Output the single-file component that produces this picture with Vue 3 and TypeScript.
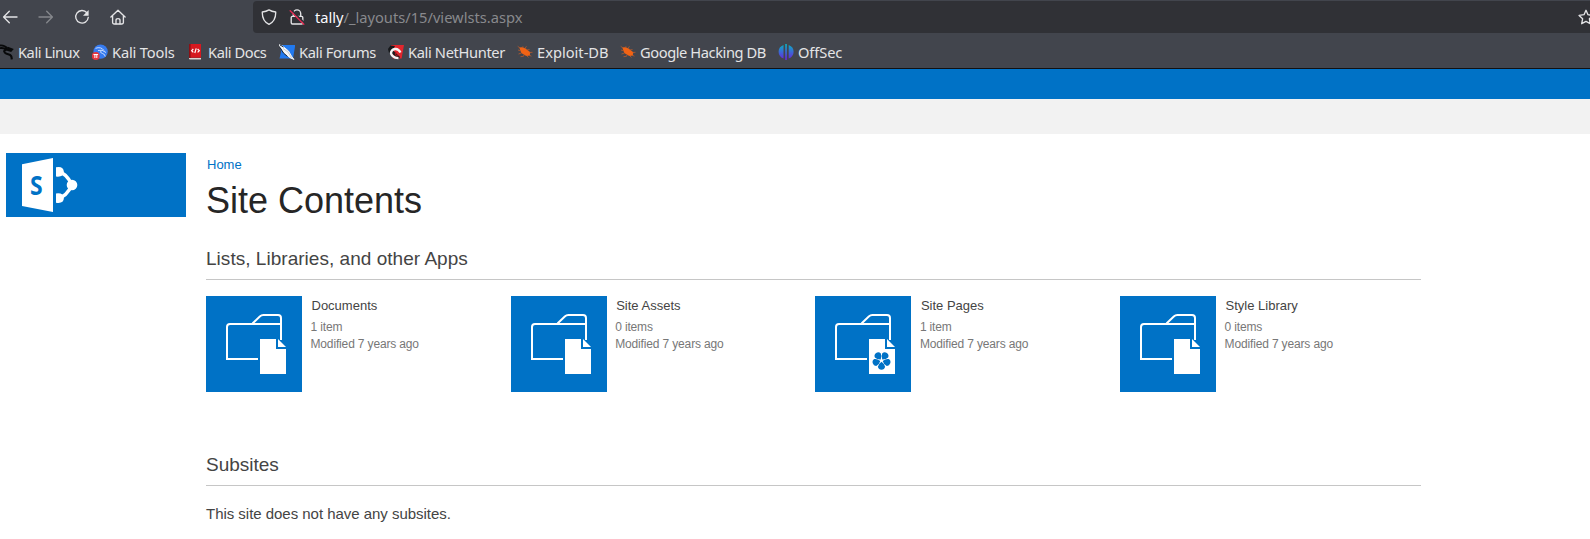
<script setup lang="ts">
interface Bookmark {
  label: string
  icon: 'dragon' | 'tools' | 'docs' | 'forums' | 'hunter' | 'bug' | 'offsec'
  slot: string
}

interface AppTile {
  name: string
  count: string
  modified: string
  flower?: boolean
}

const bookmarks: Bookmark[] = [
  { label: 'Kali Linux', icon: 'dragon', slot: 'w-linux' },
  { label: 'Kali Tools', icon: 'tools', slot: 'w-tools' },
  { label: 'Kali Docs', icon: 'docs', slot: 'w-docs' },
  { label: 'Kali Forums', icon: 'forums', slot: 'w-forums' },
  { label: 'Kali NetHunter', icon: 'hunter', slot: 'w-hunter' },
  { label: 'Exploit-DB', icon: 'bug', slot: 'w-exploit' },
  { label: 'Google Hacking DB', icon: 'bug', slot: 'w-google' },
  { label: 'OffSec', icon: 'offsec', slot: 'w-offsec' },
]

const tiles: AppTile[] = [
  { name: 'Documents', count: '1 item', modified: 'Modified 7 years ago' },
  { name: 'Site Assets', count: '0 items', modified: 'Modified 7 years ago' },
  { name: 'Site Pages', count: '1 item', modified: 'Modified 7 years ago', flower: true },
  { name: 'Style Library', count: '0 items', modified: 'Modified 7 years ago' },
]

const petals: number[] = [0, 72, 144, 216, 288]
</script>

<template>
  <div class="window">
    <header class="chrome">
      <div class="toolbar">
        <div class="nav">
          <svg class="nav-icon" viewBox="0 0 16 16"><path d="M15 8H1.8M7.3 2.3 1.6 8l5.7 5.7" /></svg>
          <svg class="nav-icon dim" viewBox="0 0 16 16"><path d="M1 8h13.2M8.7 2.3 14.4 8l-5.7 5.7" /></svg>
          <svg class="nav-icon" viewBox="0 0 16 16">
            <path d="M12.900 3.800A6.300 6.300 0 1 0 14.300 8.300" />
            <path class="solid" d="M14.600 1v5.200a.5.5 0 0 1-.5.5H9z" />
          </svg>
          <svg class="nav-icon" viewBox="0 0 16 16">
            <path d="M.9 8.100 8 1.200l7.100 6.900M2.600 7v6.600q0 1.400 1.400 1.400h8q1.400 0 1.400-1.400V7" />
            <path d="M6 14.800v-3.600q0-1.600 2-1.600t2 1.600v3.600" />
          </svg>
        </div>
        <div class="urlbar">
          <svg class="url-icon shield" viewBox="0 0 16 16">
            <path d="M8 .9Q5.300 2.600 1.300 3C1.100 9 3 13 8 15.300 13 13 14.900 9 14.700 3Q10.700 2.600 8 .9Z" />
          </svg>
          <svg class="url-icon lock" viewBox="0 0 16 16">
            <path d="M4.300 7V4.500a3.700 3.700 0 0 1 7.400 0V7M3.400 7.300h9.200q1.200 0 1.200 1.200v5q0 1.500-1.200 1.500H3.400q-1.200 0-1.200-1.500v-5q0-1.200 1.200-1.200Z" />
            <path class="under" d="M2.200.7 15.800 14.300" />
            <path class="slash" d="M1.200 1.700 14.800 15.300" />
          </svg>
          <span class="url"><b>tally</b>/_layouts/15/viewlsts.aspx</span>
          <svg class="url-icon star" viewBox="0 0 16 16">
            <path d="m8 1.300 2 4.400 4.900.7-3.500 3.400.8 4.900L8 12.400l-4.300 2.300.9-4.900L1.100 6.400 6 5.700Z" />
          </svg>
        </div>
      </div>
      <nav class="bookmarks">
        <a v-for="b in bookmarks" :key="b.label" class="bookmark" :class="b.slot">
          <svg v-if="b.icon === 'dragon'" class="fav" viewBox="0 0 16 16">
            <g fill="none" stroke="#08090a">
              <path stroke-width="1.900" d="M0 1.800c4-1 7.200-.2 9.700 2.900M0 4.600c3.500-1.200 6-.8 8.500.9" />
              <path stroke-width="2.100" d="M9.500 3.600 14 5.500l-1.200 1.300-3.500-1C6.500 5.500 5.200 7 7 8.800c2 1.700 4.800 1.300 6 3 .8 1.200.6 2.300.8 3.500" />
            </g>
          </svg>
          <svg v-else-if="b.icon === 'tools'" class="fav" viewBox="0 0 16 16">
            <circle cx="8.600" cy="7.600" r="7.200" fill="#367bf0" />
            <path d="M3.500 4.300Q9 2.300 12 6.500M6 6.500q4-1.500 8 2M9 6.700q-1.500 2 1.500 2.800 2.500.6 2.700 3" fill="none" stroke="#d9e7ff" stroke-width=".9" />
            <circle cx="3.800" cy="12" r="3.900" fill="#e5373f" />
            <path d="M1.500 10.500h4.600M2.900 10.500V14M4.800 10.500V14" stroke="#fff" stroke-width="1" fill="none" />
          </svg>
          <svg v-else-if="b.icon === 'docs'" class="fav" viewBox="0 0 16 16">
            <path d="M2.500 0H13v13.700H1V1.500Q1 0 2.500 0Z" fill="#d71920" />
            <path d="M1 0h1.600v14H1Z" fill="#8d1015" />
            <path d="M1 14h12v1.500H2Q1 15.500 1 14.600Z" fill="#ddd5d3" />
            <path d="M5.300 5 3.700 6.700l1.600 1.700M9.600 5l1.700 1.700-1.700 1.700M8.200 4.300 6.800 9" stroke="#fff" stroke-width="1.200" fill="none" />
          </svg>
          <svg v-else-if="b.icon === 'forums'" class="fav" viewBox="0 0 16 16">
            <path d="M1 1h15.300L14 14.600H.5L2 8Z" fill="#2179ef" />
            <path d="M0 .5 3.500 2l6 5 3.500 6 2 2.500-4-1.800L5 9Z" fill="#f5f6f7" stroke="#f5f6f7" stroke-width=".9" />
            <path d="M.8.8 4.500 3M1 3.500l3.500 5.500 4 3.500" stroke="#17212e" stroke-width="1" fill="none" />
            <path d="M4 4.500 9 8l3.500 5.800" stroke="#a6b0ba" stroke-width=".6" fill="none" />
          </svg>
          <svg v-else-if="b.icon === 'hunter'" class="fav" viewBox="0 0 16 16">
            <path d="M3 1h13l-2.400 13.600H5L3 8Z" fill="#e2262d" />
            <path d="M0 5 2.500 1.500 7 2 4 7.500 1 9Z" fill="#16181b" />
            <path d="M11 14.200 3.500 7" stroke="#1a1b1e" stroke-width="3" />
            <path d="M10.500 14.200C6 14.300 2 11 3.300 7.500 5.300 4 10 4 12.500 8.500" fill="none" stroke="#f4f4f4" stroke-width="2.300" />
            <path d="M10.500 12C8 12 6.500 10 8 8.300" fill="none" stroke="#a0161c" stroke-width="1.200" />
          </svg>
          <svg v-else-if="b.icon === 'bug'" class="fav" viewBox="0 0 16 16">
            <path d="M2.300 3.600Q5 2.500 8.500 4.400l4.800 3.900-.5 3.300-3.500.4-5-2.900Z" fill="#f26314" />
            <path d="M3 4 .7 2.300M5 3.800l1-1.500M8 4.500l1.400-2.200M10 6l2.500-.5M12.500 8.500l3-.2M12 11l2.400 1.200M9.500 11.500l2 2M7 10.800l-.5 1.500-3 .4M4.500 9l-3 1M3.500 6.700 1 6" fill="none" stroke="#c75d28" stroke-width=".7" />
          </svg>
          <svg v-else class="fav" viewBox="0 0 16 16">
            <defs>
              <linearGradient id="offsec-fade" x1="0" y1="0" x2="0" y2="16" gradientUnits="userSpaceOnUse">
                <stop offset="0" stop-color="#08b3c0" />
                <stop offset=".5" stop-color="#3b68d5" />
                <stop offset="1" stop-color="#6a21d8" />
              </linearGradient>
            </defs>
            <g fill="url(#offsec-fade)">
              <path d="M5.500 1v13.500Q.6 12.500.6 7.700T5.500 1ZM10.700 1v13.500q4.900-2 4.900-6.800T10.700 1Z" />
              <path d="M7.200 0h1.700v16H7.200Z" />
            </g>
          </svg>
          <span>{{ b.label }}</span>
        </a>
      </nav>
    </header>

    <div class="suite-bar"></div>
    <div class="ribbon"></div>

    <div class="page">
      <aside class="side">
        <div class="logo">
          <svg viewBox="0 0 180 64">
            <path fill="#fff" d="M16 11.200 47 5v54L16 53Z" />
            <text class="logo-letter" transform="translate(24 41.500) scale(.88 1)">S</text>
            <path d="M53 19.500q7 0 13 12.500-6 12-13 12.500" fill="none" stroke="#fff" stroke-width="3.600" />
            <g fill="#fff">
              <circle cx="66" cy="32" r="5.300" />
              <path d="M50 14.300q7.500-1.500 7.900 4.800-.2 5.300-7.900 4.500ZM50 40.400q7.500-1 7.900 4.600-.2 6-7.900 4.700Z" />
            </g>
          </svg>
        </div>
      </aside>

      <main class="content">
        <a class="crumb">Home</a>
        <h1>Site Contents</h1>
        <h2 class="lists">Lists, Libraries, and other Apps</h2>
        <div class="tiles">
          <article v-for="t in tiles" :key="t.name" class="tile">
            <svg class="tile-icon" viewBox="0 0 96 96">
              <rect width="96" height="96" fill="#0072c6" />
              <path d="M52 63H21V31q0-3 3-3h51M46.500 27.500l7.300-7q1.600-1.500 3.500-1.500H72q3 0 3 3v22" fill="none" stroke="#fff" stroke-width="2" />
              <path d="M54 43h16v10h10v25H54Z" fill="#fff" />
              <path d="M72 43v8h8Z" fill="#fff" />
              <g v-if="t.flower" fill="#0072c6" transform="translate(66.500 64.500)">
                <path v-for="p in petals" :key="p" :transform="`rotate(${p + 36})`" d="M0-1.300Q-3.200-3.500-3.600-6.300-3-9.200 0-9.200T3.600-6.300Q3.200-3.500 0-1.300Z" />
              </g>
            </svg>
            <div class="tile-text">
              <div class="tile-name">{{ t.name }}</div>
              <div class="meta">{{ t.count }}</div>
              <div class="meta">{{ t.modified }}</div>
            </div>
          </article>
        </div>
        <h2 class="subsites">Subsites</h2>
        <p class="empty">This site does not have any subsites.</p>
      </main>
    </div>
  </div>
</template>

<style>
body {
  margin: 0;
  background: #fff;
}
</style>

<style scoped>
.window {
  width: 1590px;
  height: 539px;
  overflow: hidden;
  background: #fff;
  font-family: "Liberation Sans", Arial, sans-serif;
}
.chrome {
  height: 68px;
  box-sizing: content-box;
  border-bottom: 1px solid #101114;
  background: #42454d;
  font-family: "Noto Sans", sans-serif;
  color: #e4e4e6;
  overflow: hidden;
}
.toolbar {
  display: flex;
  height: 33px;
  padding-top: 1px;
  box-sizing: border-box;
}
.nav {
  width: 253px;
  padding: 8px 0 0 2px;
  display: flex;
  gap: 20px;
  box-sizing: border-box;
  flex: none;
}
.nav-icon,
.url-icon {
  width: 16px;
  height: 16px;
  flex: none;
  fill: none;
  stroke: #e4e4e6;
  stroke-width: 1.35;
  stroke-linejoin: round;
  stroke-linecap: round;
}
.nav-icon .solid {
  fill: #e4e4e6;
  stroke: none;
}
.nav-icon.dim {
  stroke: #85878c;
}
.urlbar {
  flex: none;
  width: 1350px;
  height: 32px;
  border-radius: 4px;
  background: #303136;
  display: flex;
  align-items: center;
  box-sizing: border-box;
  padding-left: 8px;
}
.lock {
  margin-left: 12px;
}
.lock .under {
  stroke: #303136;
  stroke-width: 1.6;
}
.lock .slash {
  stroke: #e22850;
}
.url {
  margin-left: 10px;
  width: 1263px;
  font-size: 14.67px;
  line-height: 20px;
  color: #88898d;
}
.url b {
  font-weight: 400;
  color: #fbfbfe;
}
.bookmarks {
  display: flex;
  height: 20px;
  padding-top: 9px;
}
.bookmark {
  display: flex;
  align-items: center;
  flex: none;
  gap: 4px;
  font-size: 14.67px;
  line-height: 20px;
  white-space: nowrap;
}
.fav {
  width: 16px;
  height: 16px;
  flex: none;
}
.w-linux { width: 94px; margin-left: -2px; letter-spacing: -0.45px; }
.w-tools { width: 96px; letter-spacing: -0.16px; }
.w-docs { width: 91px; letter-spacing: -0.43px; }
.w-forums { width: 109px; letter-spacing: -0.36px; }
.w-hunter { width: 129px; letter-spacing: -0.36px; }
.w-exploit { width: 103px; }
.w-google { width: 158px; letter-spacing: -0.42px; }
.w-offsec { width: 80px; letter-spacing: -0.1px; }
.suite-bar {
  height: 30px;
  background: #0072c6;
}
.ribbon {
  height: 35px;
  background: #f2f2f2;
}
.page {
  display: flex;
}
.side {
  width: 206px;
  flex: none;
  padding: 19px 0 0 6px;
  box-sizing: border-box;
}
.logo {
  width: 180px;
  height: 64px;
  background: #0072c6;
}
.logo svg {
  display: block;
}
.logo-letter {
  font: 700 26px "Open Sans", sans-serif;
  fill: #0072c6;
}
.content {
  width: 1215px;
  padding-top: 21px;
}
.crumb {
  display: block;
  padding-left: 1px;
  font-size: 13px;
  line-height: 20px;
  color: #0072c6;
}
h1 {
  margin: 4px 0 23px;
  font-size: 36px;
  font-weight: 400;
  line-height: 44px;
  color: #262626;
}
h2 {
  margin: 0;
  height: 33px;
  border-bottom: 1px solid #c6c6c6;
  font-size: 19px;
  font-weight: 400;
  line-height: 26px;
  color: #444;
}
.lists {
  letter-spacing: 0.03px;
}
.tiles {
  display: grid;
  grid-template-columns: repeat(4, 304.7px);
  margin: 16px 0 60px;
}
.tile {
  display: flex;
  height: 96px;
}
.tile-icon {
  width: 96px;
  height: 96px;
  flex: none;
}
.tile-text {
  padding-left: 8.5px;
  white-space: nowrap;
}
.tile-name {
  padding-left: 1px;
  margin-bottom: 3px;
  font-size: 13px;
  line-height: 20px;
  color: #444;
}
.meta {
  font-size: 12px;
  letter-spacing: -0.15px;
  line-height: 17px;
  color: #777;
}
.empty {
  margin: 18px 0 0;
  font-size: 15px;
  letter-spacing: -0.03px;
  line-height: 20px;
  color: #444;
}
</style>
